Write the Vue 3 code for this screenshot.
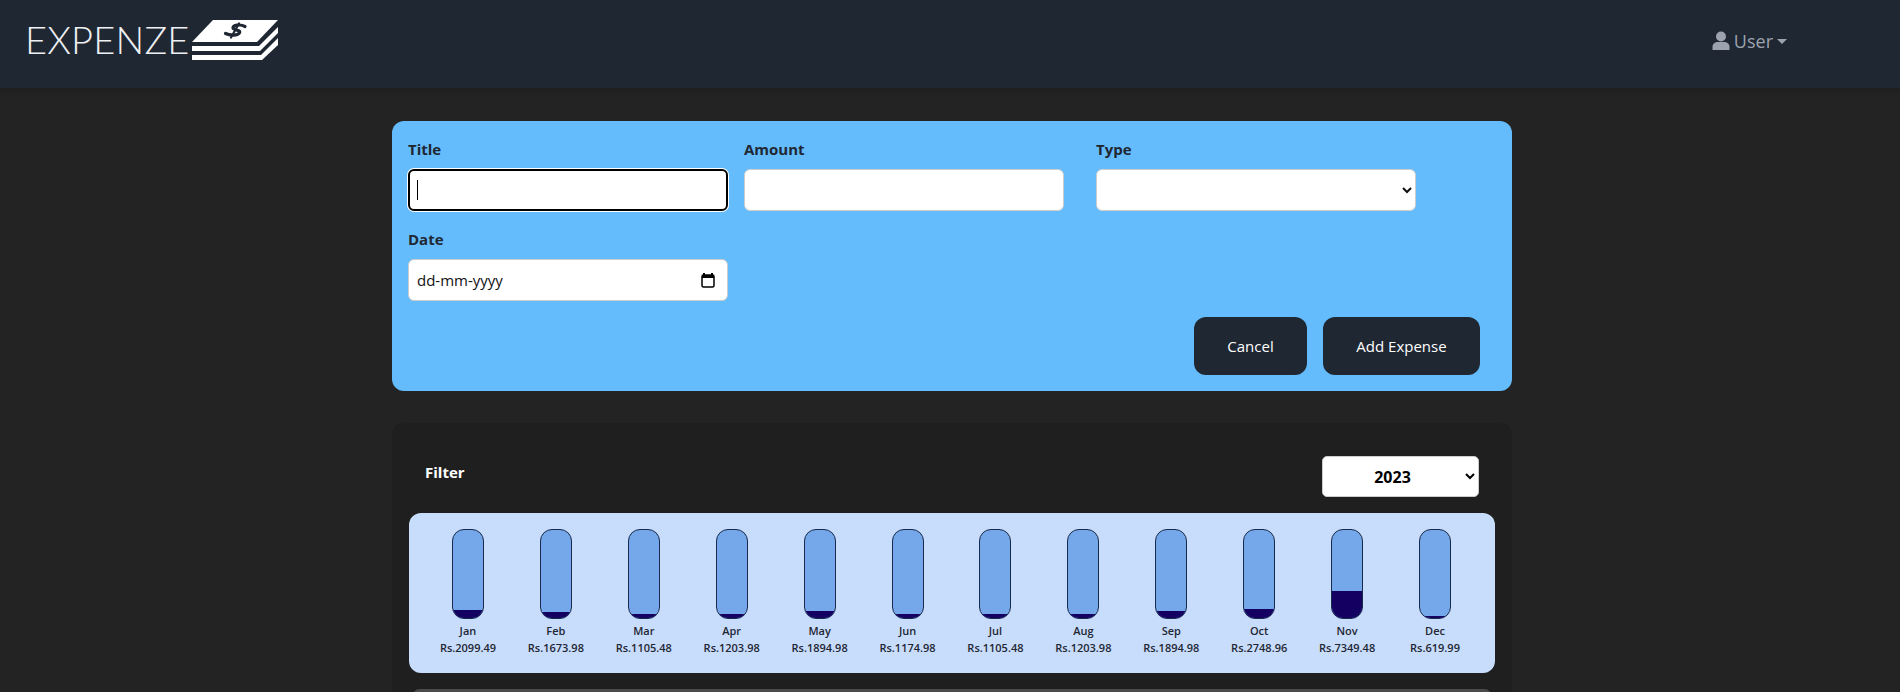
<template>
  <div class="page">
    <nav class="navbar">
      <div class="brand">
        <span class="brand-text">EXPENZE</span>
        <svg class="brand-logo" width="86" height="40" viewBox="0 0 86 40">
          <polygon points="0,22 21,0 86,0 65,22" fill="#fff" />
          <polygon points="0,26 67,26 86,7 86,13 68,31 0,31" fill="#fff" />
          <polygon points="0,35 69,35 86,18 86,25 70,40 0,40" fill="#fff" />
          <g fill="none" stroke="#1f2733" stroke-linecap="round">
            <path stroke-width="3.200" d="M53,6.500 C48,3.800 41,5.200 41,7.800 C41,10.500 49,9.500 47.500,12.800 C46,15.800 38,15.800 33.500,13.500" />
            <path stroke-width="2.200" d="M47,3.500 L39,17.500" />
          </g>
        </svg>
      </div>
      <a class="user-menu">
        <svg width="18" height="20" viewBox="0 0 18 20">
          <circle cx="9" cy="5.500" r="5" fill="#9ca3af" />
          <path d="M0.500,19 V16 C0.500,12.500 3,11 6,11 H12 C15,11 17.500,12.500 17.500,16 V19 Z" fill="#9ca3af" />
        </svg>
        <span>User</span>
        <i class="caret"></i>
      </a>
    </nav>

    <main class="content">
      <form class="expense-form" @submit.prevent>
        <div class="fields">
          <div class="field">
            <label>Title</label>
            <div class="input-wrap">
              <input ref="titleInput" class="control" type="text" />
              <span class="text-cursor"></span>
            </div>
          </div>
          <div class="field">
            <label>Amount</label>
            <input class="control" type="text" />
          </div>
          <div class="field type">
            <label>Type</label>
            <select class="control"><option></option></select>
          </div>
          <div class="field">
            <label>Date</label>
            <div class="control date-control">
              <span>dd-mm-yyyy</span>
              <svg width="14" height="15" viewBox="0 0 14 15">
                <path d="M3,0 V2 M11,0 V2" stroke="#000" stroke-width="2" />
                <rect x="1" y="2" width="12" height="12" rx="1.500" fill="none" stroke="#000" stroke-width="1.500" />
                <rect x="1" y="2" width="12" height="3" fill="#000" />
              </svg>
            </div>
          </div>
        </div>
        <div class="actions">
          <button type="button" class="btn btn-cancel">Cancel</button>
          <button type="submit" class="btn btn-add">Add Expense</button>
        </div>
      </form>

      <section class="expenses">
        <div class="filter-row">
          <span class="filter-label">Filter</span>
          <select class="year-select"><option>2023</option></select>
        </div>
        <div class="chart">
          <div v-for="m in months" :key="m.name" class="bar-col">
            <div class="bar">
              <div class="bar-fill" :style="{ height: m.fill + 'px' }"></div>
            </div>
            <div class="bar-label">{{ m.name }}</div>
            <div class="bar-label">Rs.{{ m.amount }}</div>
          </div>
        </div>
        <div class="next-item"></div>
      </section>
    </main>
  </div>
</template>

<script setup>
import { ref, onMounted } from 'vue'

const titleInput = ref(null)

const months = [
  { name: 'Jan', amount: '2099.49', fill: 8 },
  { name: 'Feb', amount: '1673.98', fill: 6 },
  { name: 'Mar', amount: '1105.48', fill: 4 },
  { name: 'Apr', amount: '1203.98', fill: 4 },
  { name: 'May', amount: '1894.98', fill: 7 },
  { name: 'Jun', amount: '1174.98', fill: 4 },
  { name: 'Jul', amount: '1105.48', fill: 4 },
  { name: 'Aug', amount: '1203.98', fill: 4 },
  { name: 'Sep', amount: '1894.98', fill: 7 },
  { name: 'Oct', amount: '2748.96', fill: 9 },
  { name: 'Nov', amount: '7349.48', fill: 27 },
  { name: 'Dec', amount: '619.99', fill: 2 }
]

onMounted(() => {
  titleInput.value.focus()
})
</script>

<style>
html, body {
  margin: 0;
  background: #232323;
  overflow: hidden;
}
</style>

<style scoped>
.page {
  height: 692px;
  overflow: hidden;
  font-family: "Open Sans", "Noto Sans", sans-serif;
  background: #232323;
}

.navbar {
  height: 88px;
  display: flex;
  justify-content: space-between;
  background: #1f2733;
  box-shadow: 0 2px 6px rgba(0, 0, 0, 0.2);
  padding: 20px 113px 0 25px;
  box-sizing: border-box;
}

.brand {
  display: flex;
  align-items: flex-start;
  height: 40px;
}

.brand-text {
  font-family: "Lato", sans-serif;
  font-weight: 300;
  font-size: 38px;
  line-height: 38px;
  letter-spacing: 0.2px;
  color: #eef0f3;
  width: 167px;
  flex-shrink: 0;
}

.user-menu {
  display: flex;
  align-items: center;
  gap: 4px;
  height: 24px;
  margin-top: 9px;
  color: #9ca3af;
  font-size: 18px;
}

.caret {
  width: 0;
  height: 0;
  border-top: 5px solid #9ca3af;
  border-left: 5px solid transparent;
  border-right: 5px solid transparent;
}

.content {
  width: 1120px;
  margin: 33px 0 0 392px;
}

.expense-form {
  height: 270px;
  box-sizing: border-box;
  background: #64bcfd;
  border-radius: 12px;
  padding: 18px 32px 16px 16px;
  display: flex;
  flex-direction: column;
}

.fields {
  display: grid;
  grid-template-columns: 320px 320px 320px;
  column-gap: 16px;
  row-gap: 18px;
}

.field.type {
  margin-left: 16px;
}

.field label {
  display: block;
  font-size: 15px;
  font-weight: 700;
  line-height: 20px;
  color: #1f2733;
  margin-bottom: 10px;
}

.input-wrap {
  position: relative;
}

.text-cursor {
  position: absolute;
  left: 9px;
  top: 11px;
  width: 1px;
  height: 20px;
  background: #000;
}

.control {
  display: block;
  width: 320px;
  height: 42px;
  box-sizing: border-box;
  border: 1px solid #ccc;
  border-radius: 6px;
  background: #fff;
  padding: 0 8px;
  font-family: inherit;
  font-size: 15px;
  color: #111;
}

input.control:focus {
  outline: none;
  border: 2px solid #000;
  box-shadow: 0 0 0 1px #fff;
  caret-color: transparent;
}

.date-control {
  display: flex;
  align-items: center;
  justify-content: space-between;
  padding-right: 12px;
}

.actions {
  margin-top: auto;
  display: flex;
  justify-content: flex-end;
  gap: 16px;
}

.btn {
  height: 58px;
  padding: 0;
  border: none;
  border-radius: 12px;
  background: #1f2733;
  color: #fff;
  font-family: inherit;
  font-size: 15px;
}

.btn-cancel {
  width: 113px;
}

.btn-add {
  width: 157px;
}

.expenses {
  margin-top: 32px;
  background: #1f1f1f;
  border-radius: 12px;
  padding: 0 17px;
  height: 300px;
}

.filter-row {
  height: 90px;
  display: flex;
  justify-content: space-between;
  align-items: flex-start;
  padding: 33px 16px 0 16px;
  box-sizing: border-box;
}

.filter-label {
  color: #fff;
  font-weight: 700;
  font-size: 15px;
  line-height: 20px;
  margin-top: 6px;
}

.year-select {
  width: 157px;
  height: 41px;
  border: 1px solid #ccc;
  border-radius: 5px;
  background: #fff;
  padding-right: 4px;
  font-family: inherit;
  font-size: 16px;
  font-weight: 700;
  text-align: center;
  color: #000;
}

.chart {
  height: 160px;
  box-sizing: border-box;
  background: #c8dcfc;
  border-radius: 12px;
  padding: 16px 16px 0 15px;
  display: grid;
  grid-template-columns: repeat(12, 1fr);
}

.bar-col {
  display: flex;
  flex-direction: column;
  align-items: center;
}

.bar {
  width: 32px;
  height: 90px;
  box-sizing: border-box;
  border: 1px solid #1a2a4a;
  border-radius: 12px;
  background: #75a8ea;
  overflow: hidden;
  display: flex;
  align-items: flex-end;
  margin-bottom: 3px;
}

.bar-fill {
  width: 100%;
  background: #140060;
}

.bar-label {
  font-size: 11px;
  font-weight: 600;
  line-height: 17px;
  color: #1f2733;
  white-space: nowrap;
}

.next-item {
  height: 40px;
  margin: 16px 3px 0;
  border-radius: 8px;
  background: #4b4b4b;
}
</style>
